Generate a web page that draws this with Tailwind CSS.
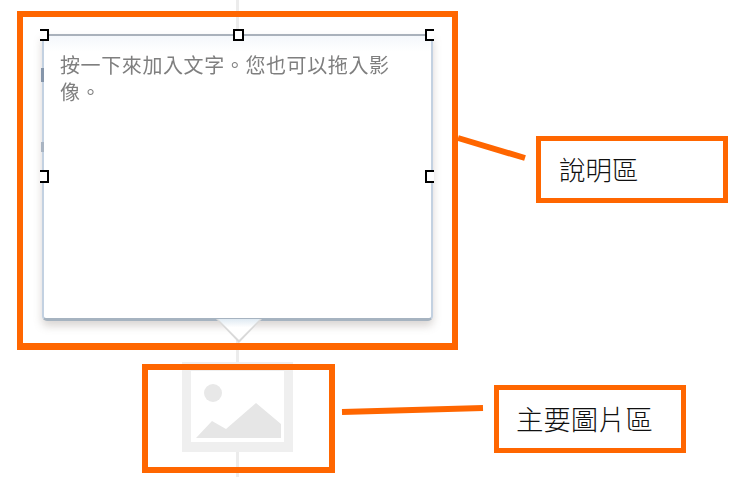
<!DOCTYPE html>
<html lang="zh-Hant">
<head>
<meta charset="UTF-8" />
<script src="https://cdn.jsdelivr.net/npm/@tailwindcss/browser@4"></script>
</head>
<body class="bg-white">
<div class="relative w-[738px] h-[477px] overflow-hidden bg-white font-['Noto_Sans_CJK_TC','Noto_Sans_CJK_SC',sans-serif]">
  <!-- guide line behind the slide -->
  <div class="absolute left-[236px] top-0 w-[3px] h-full bg-[#ececec]"></div>

  <!-- picture placeholder -->
  <svg class="absolute left-[182px] top-[362px] blur-[0.5px]" width="111" height="90" viewBox="0 0 111 90">
    <rect width="111" height="90" fill="#efefef" />
    <rect x="9" y="9" width="93" height="71" fill="#fff" />
    <circle cx="31" cy="31" r="9" fill="#e8e8e8" />
    <path d="M14 76 L30 59 L44 67 L74 41 L99 62 L99 76 Z" fill="#e6e6e6" />
  </svg>

  <!-- text popup -->
  <div class="absolute left-[42px] top-[34px] w-[391px] h-[287px] rounded-b-[5px] border-x-2 border-x-[#c3d1e1] border-t-2 border-t-[#a9b1bb] border-b-[3px] border-b-[#a6b3c0] bg-white shadow-[0_5px_9px_rgba(130,115,110,0.3)]">
    <div class="absolute inset-x-0 top-0 h-4 bg-gradient-to-b from-[#f4f7fb] to-white"></div>
    <p class="relative w-[362px] pl-[16px] pt-[15px] text-[20px] leading-[27px] tracking-[0.6px] text-[#7f7f7f] blur-[0.4px]">按一下來加入文字。您也可以拖入影像。</p>
  </div>
  <!-- popup tail -->
  <svg class="absolute left-[214px] top-[319px]" width="50" height="25" viewBox="0 0 50 25">
    <defs>
      <linearGradient id="tail" x1="0" y1="0" x2="0" y2="1">
        <stop offset="0" stop-color="#dfeaf2" />
        <stop offset="0.4" stop-color="#ffffff" />
      </linearGradient>
    </defs>
    <path d="M2 0 L48 0 L25 24 Z" fill="#d9d9d9" />
    <path d="M4 0 L46 0 L25 21 Z" fill="url(#tail)" />
  </svg>
  <div class="absolute left-[41px] top-[68px] w-[3px] h-[14px] bg-[#8595aa] blur-[0.5px]"></div>
  <div class="absolute left-[41px] top-[142px] w-[3px] h-[10px] bg-[#a9b4c2] blur-[0.5px]"></div>

  <!-- selection handles -->
  <div class="absolute left-[40px] top-[29px] w-[9px] h-[12px] border-2 border-l-0 border-black bg-white"></div>
  <div class="absolute left-[233px] top-[29px] w-[11px] h-[12px] border-2 border-black bg-white"></div>
  <div class="absolute left-[425px] top-[29px] w-[9px] h-[12px] border-2 border-r-0 border-black bg-white"></div>
  <div class="absolute left-[40px] top-[170px] w-[9px] h-[13px] border-2 border-l-0 border-black bg-white"></div>
  <div class="absolute left-[425px] top-[170px] w-[9px] h-[13px] border-2 border-r-0 border-black bg-white"></div>

  <!-- orange frames -->
  <div class="absolute left-[17px] top-[11px] w-[441px] h-[339px] border-[6px] border-b-[7px] border-[#ff6600]"></div>
  <div class="absolute left-[142px] top-[364px] w-[193px] h-[109px] border-[6px] border-[#ff6600]"></div>

  <!-- leader lines -->
  <svg class="absolute left-0 top-0" width="738" height="477" viewBox="0 0 738 477">
    <line x1="458" y1="138" x2="525" y2="158" stroke="#ff6600" stroke-width="6" />
    <line x1="342" y1="412" x2="483" y2="408" stroke="#ff6600" stroke-width="6" />
  </svg>

  <!-- labels -->
  <div class="absolute left-[536px] top-[136px] w-[192px] h-[67px] border-[5px] border-[#ff6600] flex items-center pl-[18px] text-[26.5px] font-light text-[#111] leading-none">說明區</div>
  <div class="absolute left-[494px] top-[385px] w-[192px] h-[68px] border-[5px] border-[#ff6600] flex items-center pl-[17px] text-[27.4px] font-light text-[#111] leading-none">主要圖片區</div>
</div>
</body>
</html>
